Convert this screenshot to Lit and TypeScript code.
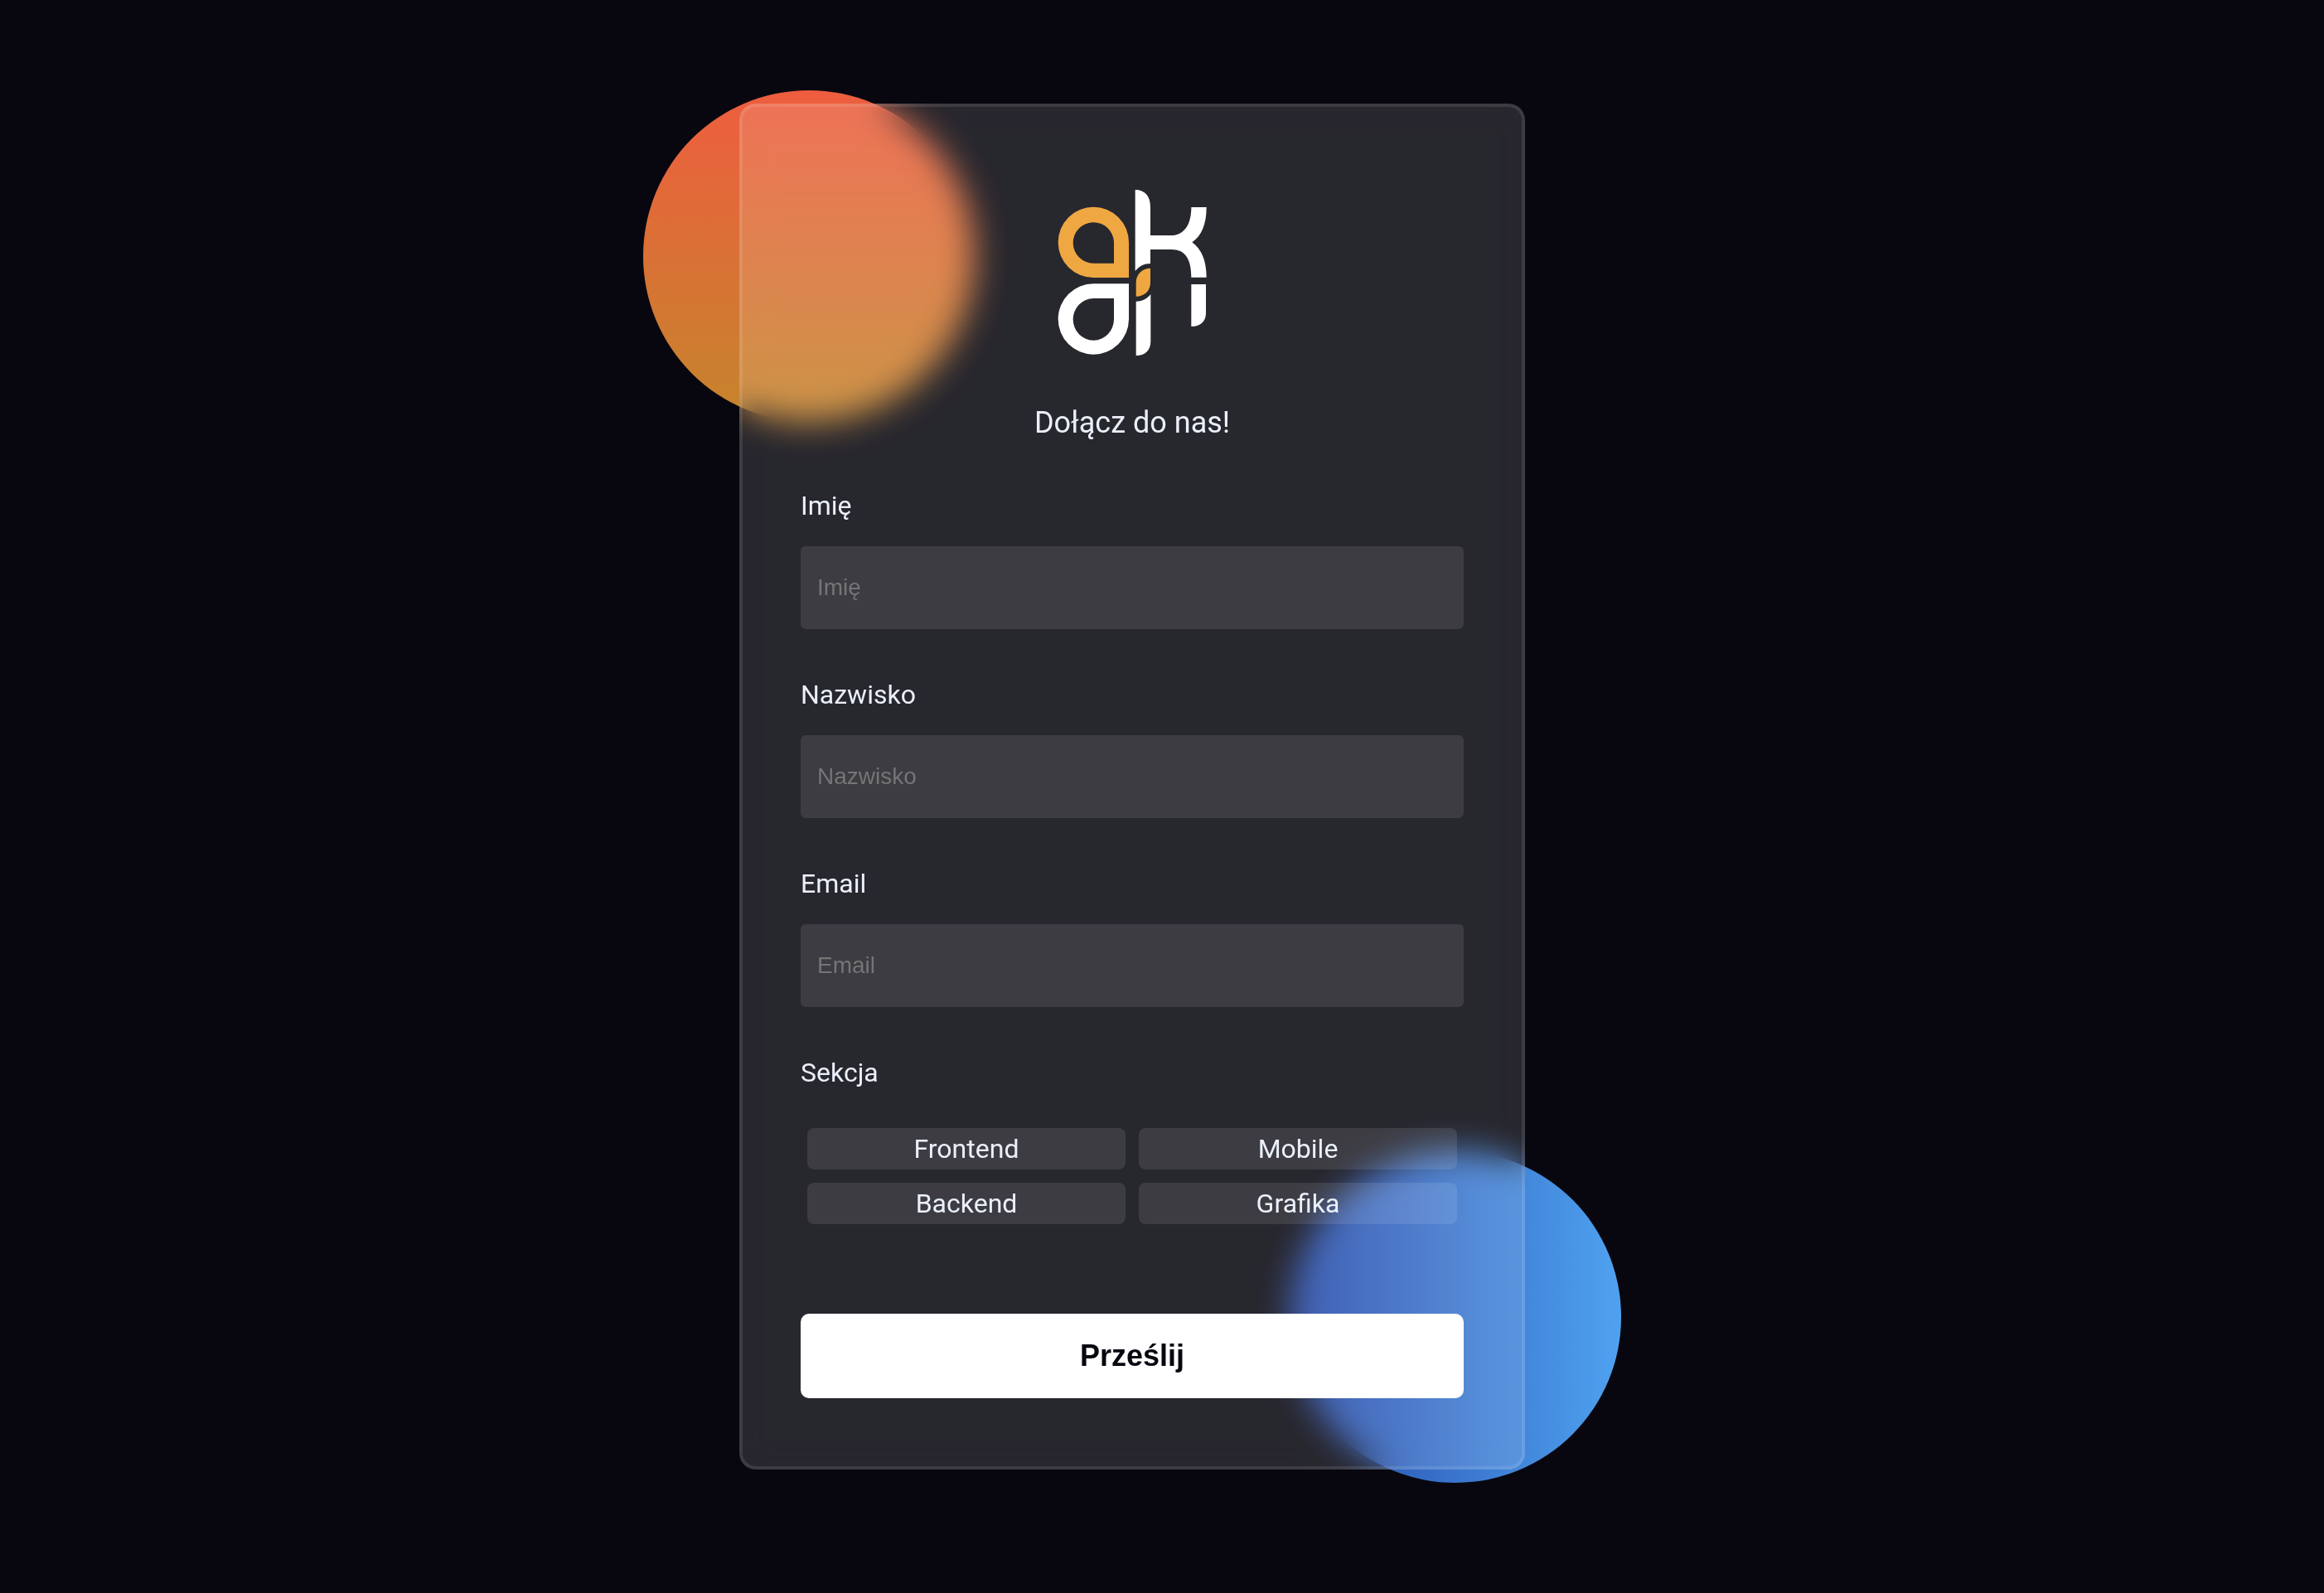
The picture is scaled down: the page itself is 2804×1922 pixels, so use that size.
import { LitElement, html, css, svg } from "lit";
import { customElement, state } from "lit/decorators.js";

interface Field {
  id: string;
  label: string;
  type: string;
}

const FIELDS: Field[] = [
  { id: "first-name", label: "Imię", type: "text" },
  { id: "last-name", label: "Nazwisko", type: "text" },
  { id: "email", label: "Email", type: "email" },
];

const SECTIONS = ["Frontend", "Mobile", "Backend", "Grafika"];

const logoShapes = svg`
  <g fill="#efa742" fill-rule="evenodd">
    <path d="M306 345H178A128 128 0 1 1 306 217ZM252 293V215A74 74 0 1 0 178 293Z" />
    <path d="M384 311V362C384 393 362 413 332 413V362C332 332 355 311 384 311Z" />
  </g>
  <g fill="#fff" fill-rule="evenodd">
    <path d="M306 367H178A128 128 0 1 0 306 496ZM252 420V496A74 76 0 1 1 178 420Z" />
    <path d="M329 27C365 27 384 50 384 90V192H465C508 188 532 152 532 90H587C587 150 570 193 535 217C570 243 587 285 587 344H532C532 277 510 243 460 243H384V294C360 294 345 303 329 321Z" />
    <path d="M332 431C357 431 372 421 385 405V575C385 608 365 627 332 627Z" />
    <path d="M532 369H585V472C585 504 565 522 532 522Z" />
  </g>
`;

@customElement("app-root")
export class AppRoot extends LitElement {
  static styles = css`
    :host {
      display: block;
      background: #08070f;
      color: #eaf0fb;
      font-family: Roboto, "Liberation Sans", sans-serif;
    }
    * {
      box-sizing: border-box;
    }
    .page {
      display: flex;
      align-items: center;
      justify-content: center;
      min-height: 100vh;
      padding: 16px 72px 40px 0;
    }
    .stage {
      position: relative;
      width: 100%;
      max-width: 948px;
    }
    .blob {
      position: absolute;
      width: 400px;
      height: 400px;
      border-radius: 50%;
    }
    .blob-warm {
      top: -16px;
      left: -116px;
      background: linear-gradient(#ee5d3f, #c5852c);
    }
    .blob-cool {
      right: -116px;
      bottom: -16px;
      background: linear-gradient(to right, #2447a8, #4fa2f0);
    }
    .card {
      position: relative;
      display: flex;
      flex-direction: column;
      padding: 100px 70px 82px;
      border: 4px solid rgba(255, 255, 255, 0.1);
      border-radius: 20px;
      background: rgba(255, 255, 255, 0.13);
      backdrop-filter: blur(20px);
    }
    .logo {
      display: block;
      align-self: center;
      width: 180px;
      height: 200px;
    }
    .title {
      margin: 60px 0 0;
      font-size: 36px;
      font-weight: 400;
      line-height: 42px;
      text-align: center;
    }
    .field {
      display: flex;
      flex-direction: column;
      gap: 30px;
      margin-top: 60px;
    }
    .label {
      padding: 0;
      font-size: 32px;
      font-weight: 400;
      line-height: 38px;
    }
    .input {
      width: 100%;
      height: 100px;
      padding: 0 20px;
      border: 0;
      border-radius: 6px;
      background: rgba(255, 255, 255, 0.1);
      color: inherit;
      font-family: "Liberation Sans", Arial, sans-serif;
      font-size: 28px;
    }
    .input::placeholder {
      color: #757575;
    }
    .sections {
      min-width: 0;
      margin: 60px 0 0;
      padding: 0;
      border: 0;
    }
    .options {
      display: grid;
      grid-template-columns: 1fr 1fr;
      gap: 16px;
      padding: 48px 8px 0;
    }
    .option {
      height: 50px;
      padding: 0;
      border: 0;
      border-radius: 8px;
      background: rgba(255, 255, 255, 0.1);
      color: inherit;
      font-family: inherit;
      font-size: 32px;
      line-height: 50px;
      cursor: pointer;
    }
    .option[aria-pressed="true"] {
      background: rgba(255, 255, 255, 0.3);
    }
    .submit {
      height: 102px;
      margin-top: 108px;
      padding: 0;
      border: 0;
      border-radius: 10px;
      background: #fff;
      color: #080710;
      font-family: "Liberation Sans", Arial, sans-serif;
      font-size: 36px;
      font-weight: 700;
      cursor: pointer;
    }
  `;

  @state() private selected = "";

  render() {
    return html`
      <main class="page">
        <div class="stage">
          <div class="blob blob-warm"></div>
          <div class="blob blob-cool"></div>
          <form class="card" @submit=${(e: Event) => e.preventDefault()}>
            <svg class="logo" viewBox="48 27 540 600" aria-hidden="true">${logoShapes}</svg>
            <h1 class="title">Dołącz do nas!</h1>
            ${FIELDS.map(
              (f) => html`
                <div class="field">
                  <label class="label" for=${f.id}>${f.label}</label>
                  <input class="input" id=${f.id} name=${f.id} type=${f.type} placeholder=${f.label} />
                </div>
              `
            )}
            <fieldset class="sections">
              <legend class="label">Sekcja</legend>
              <div class="options">
                ${SECTIONS.map(
                  (s) => html`
                    <button
                      class="option"
                      type="button"
                      aria-pressed=${this.selected === s ? "true" : "false"}
                      @click=${() => (this.selected = s)}
                    >${s}</button>
                  `
                )}
              </div>
            </fieldset>
            <button class="submit" type="submit">Prześlij</button>
          </form>
        </div>
      </main>
    `;
  }
}
